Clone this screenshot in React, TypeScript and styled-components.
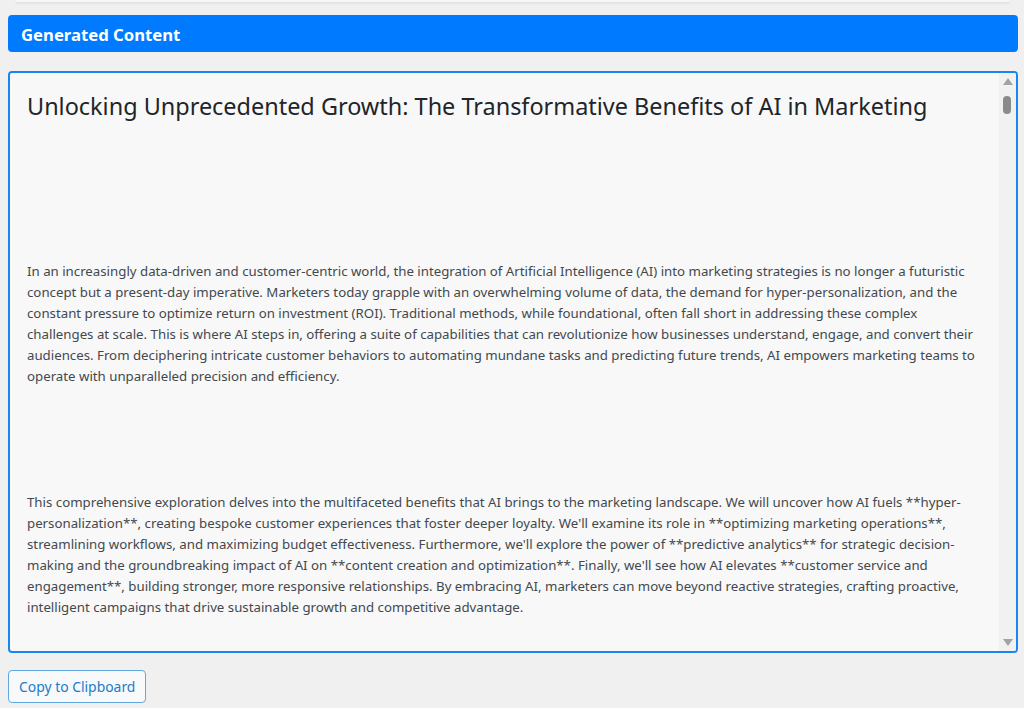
import React from "react";
import styled, { createGlobalStyle } from "styled-components";

const Global = createGlobalStyle`
  html, body { margin: 0; padding: 0; }
  body {
    background: #f0f0f0;
    font-family: "Noto Sans", "Open Sans", sans-serif;
    overflow: hidden;
  }
`;

const Page = styled.div`
  display: flex;
  flex-direction: column;
  padding: 0 6px 0 8px;
  height: 708px;
  box-sizing: border-box;
`;

const PrevCard = styled.div`
  height: 2px;
  margin: 0 8px 0 7px;
  background: #f7f7f7;
  border-radius: 0 0 4px 4px;
  box-shadow: 0 1px 3px rgba(0, 0, 0, 0.12);
`;

const HeaderBar = styled.div`
  margin-top: 13px;
  height: 37px;
  box-sizing: border-box;
  padding: 2px 13px 0;
  background: #007bff;
  border-radius: 4px;
  display: flex;
  align-items: center;
  color: #fff;
  font-weight: 700;
  font-size: 16.7px;
`;

const ContentBox = styled.div`
  position: relative;
  margin-top: 19px;
  height: 582px;
  box-sizing: border-box;
  border: 2px solid #1a85f0;
  border-radius: 4px;
  background: #f8f8f8;
  overflow: hidden;
`;

const Scroller = styled.div`
  height: 100%;
  padding: 17px 36px 0 17px;
  box-sizing: border-box;
  overflow: hidden;
`;

const Title = styled.h1`
  margin: 0;
  font-size: 23.45px;
  font-weight: 400;
  line-height: 32px;
  color: #212529;
`;

const Spacer = styled.div<{ $h: number }>`
  height: ${(p) => p.$h}px;
`;

const Para = styled.p`
  margin: 0;
  font-size: 13.25px;
  line-height: 21px;
  color: #43484e;
`;

const ScrollTrack = styled.div`
  position: absolute;
  top: 0;
  right: 0;
  bottom: 0;
  width: 17px;
  background: #f1f1f1;
`;

const Arrow = styled.div<{ $down?: boolean }>`
  position: absolute;
  left: 4px;
  ${(p) => (p.$down ? "bottom: 5px;" : "top: 5px;")}
  width: 0;
  height: 0;
  border-left: 5px solid transparent;
  border-right: 5px solid transparent;
  ${(p) =>
    p.$down ? "border-top: 7px solid #a3a3a3;" : "border-bottom: 7px solid #a3a3a3;"}
`;

const Thumb = styled.div`
  position: absolute;
  top: 23px;
  left: 4px;
  width: 8px;
  height: 18px;
  border-radius: 4px;
  background: #8a8a8a;
`;

const CopyButton = styled.button`
  align-self: flex-start;
  margin-top: 17px;
  height: 33px;
  padding: 0 10px;
  border: 1px solid #62a7dc;
  border-radius: 4px;
  background: #f7f9fa;
  color: #1b7cc9;
  font-family: "Noto Sans", "Open Sans", sans-serif;
  font-size: 13.9px;
  cursor: pointer;
`;

export default function App() {
  return (
    <>
      <Global />
      <Page>
        <PrevCard />
        <HeaderBar>Generated Content</HeaderBar>
        <ContentBox>
          <Scroller>
            <Title>
              Unlocking Unprecedented Growth: The Transformative Benefits of AI in Marketing
            </Title>
            <Spacer $h={139} />
            <Para>
              In an increasingly data-driven and customer-centric world, the integration of
              Artificial Intelligence (AI) into marketing strategies is no longer a futuristic
              concept but a present-day imperative. Marketers today grapple with an overwhelming
              volume of data, the demand for hyper-personalization, and the constant pressure to
              optimize return on investment (ROI). Traditional methods, while foundational, often
              fall short in addressing these complex challenges at scale. This is where AI steps
              in, offering a suite of capabilities that can revolutionize how businesses
              understand, engage, and convert their audiences. From deciphering intricate customer
              behaviors to automating mundane tasks and predicting future trends, AI empowers
              marketing teams to operate with unparalleled precision and efficiency.
            </Para>
            <Spacer $h={105} />
            <Para>
              This comprehensive exploration delves into the multifaceted benefits that AI brings
              to the marketing landscape. We will uncover how AI fuels **hyper-personalization**,
              creating bespoke customer experiences that foster deeper loyalty. We'll examine its
              role in **optimizing marketing operations**, streamlining workflows, and maximizing
              budget effectiveness. Furthermore, we'll explore the power of **predictive
              analytics** for strategic decision-making and the groundbreaking impact of AI on
              **content creation and optimization**. Finally, we'll see how AI elevates
              **customer service and engagement**, building stronger, more responsive
              relationships. By embracing AI, marketers can move beyond reactive strategies,
              crafting proactive, intelligent campaigns that drive sustainable growth and
              competitive advantage.
            </Para>
          </Scroller>
          <ScrollTrack>
            <Arrow />
            <Thumb />
            <Arrow $down />
          </ScrollTrack>
        </ContentBox>
        <CopyButton>Copy to Clipboard</CopyButton>
      </Page>
    </>
  );
}
